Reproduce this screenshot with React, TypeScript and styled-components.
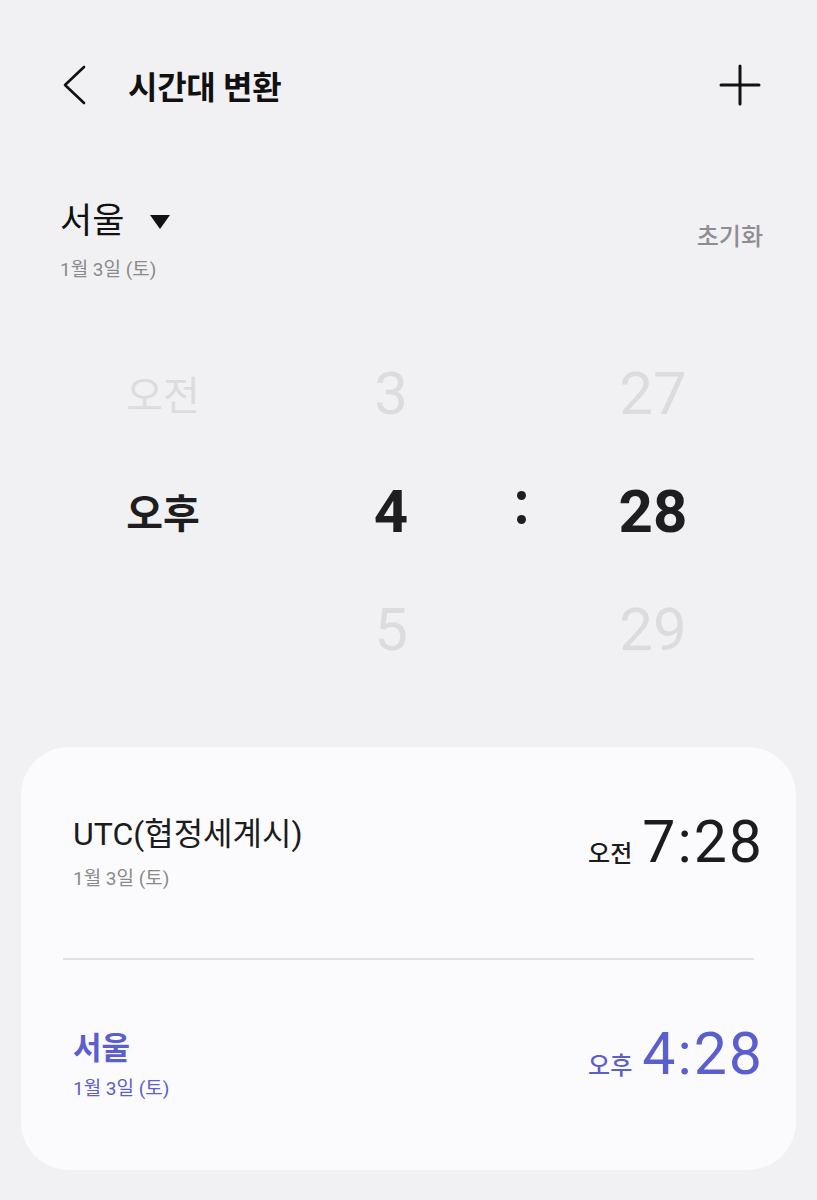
import React, { FC } from 'react';
import styled, { createGlobalStyle } from 'styled-components';

const GlobalStyle = createGlobalStyle`
  html, body {
    margin: 0;
    padding: 0;
    background: #f1f1f3;
  }
  body {
    font-family: Roboto, "Noto Sans CJK KR", sans-serif;
    color: #1c1c1e;
  }
`;

const PURPLE = '#5b5ecd';

const Screen = styled.div`
  width: 817px;
  height: 1200px;
  overflow: hidden;
  background: #f1f1f3;
  display: flex;
  flex-direction: column;
`;

const Header = styled.header`
  display: flex;
  align-items: center;
  height: 70px;
  margin-top: 50px;
  padding: 0 56px 0 60px;
`;

const IconButton = styled.button`
  display: flex;
  align-items: center;
  justify-content: center;
  padding: 0;
  border: 0;
  background: none;
  color: #111;
`;

const Title = styled.h1`
  flex: 1;
  margin: 0 0 0 40px;
  font-size: 32px;
  font-weight: 700;
  letter-spacing: -0.3px;
  color: #111;
`;

const CitySection = styled.section`
  display: flex;
  justify-content: space-between;
  align-items: flex-start;
  margin-top: 80px;
  padding: 0 54px 0 60px;
`;

const CityName = styled.div`
  display: flex;
  align-items: center;
  gap: 26px;
  font-size: 35px;
  font-weight: 400;
  line-height: 44px;
  color: #111;
`;

const DateText = styled.div<{ $accent?: boolean }>`
  margin-top: ${(p) => (p.$accent ? '10px' : '15px')};
  font-size: 19px;
  line-height: 22px;
  color: ${(p) => (p.$accent ? PURPLE : '#8a8a8c')};
`;

const ResetButton = styled.button`
  margin-top: 17px;
  padding: 0;
  border: 0;
  background: none;
  font-family: inherit;
  font-size: 24px;
  font-weight: 500;
  color: #8e8e90;
`;

const Picker = styled.div`
  display: grid;
  grid-template-columns: 206px 250px 10px 254px;
  margin-top: 53px;
  padding-left: 60px;
`;

const PickerColumn = styled.div`
  display: flex;
  flex-direction: column;
  align-items: center;
`;

const PickerCell = styled.div<{ $selected?: boolean; $korean?: boolean }>`
  height: 118px;
  display: flex;
  align-items: center;
  justify-content: center;
  font-size: ${(p) => (p.$korean ? '40px' : '60px')};
  font-weight: ${(p) => (p.$selected ? 700 : 400)};
  color: ${(p) => (p.$selected ? '#1e1e20' : '#dcdcde')};
`;

const Colon = styled.div`
  display: flex;
  flex-direction: column;
  align-items: center;
  justify-content: center;
  gap: 15px;
  height: 118px;
  margin-top: 118px;
  padding-bottom: 8px;
  box-sizing: border-box;

  span {
    width: 9px;
    height: 9px;
    border-radius: 50%;
    background: #1e1e20;
  }
`;

const Card = styled.section`
  margin: 59px 21px 0;
  height: 423px;
  border-radius: 48px;
  background: #fbfbfd;
  display: flex;
  flex-direction: column;
`;

const ZoneRow = styled.div`
  flex: 1;
  display: flex;
  align-items: center;
  justify-content: space-between;
  padding: 0 34px 0 52px;
`;

const ZoneName = styled.div<{ $accent?: boolean }>`
  font-size: ${(p) => (p.$accent ? '31px' : '32px')};
  line-height: 38px;
  font-weight: ${(p) => (p.$accent ? 700 : 400)};
  color: ${(p) => (p.$accent ? PURPLE : '#1c1c1e')};
`;

const Divider = styled.hr`
  margin: 0 42px;
  border: 0;
  border-top: 2px solid #e1e1e3;
`;

const TimeValue = styled.div<{ $accent?: boolean }>`
  display: flex;
  align-items: baseline;
  gap: 10px;
  margin-bottom: 22px;
  color: ${(p) => (p.$accent ? PURPLE : '#1c1c1e')};
`;

const Meridiem = styled.span`
  font-size: 24px;
  font-weight: 500;
`;

const Clock = styled.span`
  font-size: 59px;
  font-weight: 400;
  letter-spacing: 2px;
  margin-right: -2px;
`;

const BackIcon: FC = () => (
  <svg width="28" height="42" viewBox="0 0 28 42" fill="none">
    <path d="M24 3 L5 21 L24 39" stroke="currentColor" strokeWidth="2.6" strokeLinecap="round" strokeLinejoin="round" />
  </svg>
);

const PlusIcon: FC = () => (
  <svg width="42" height="42" viewBox="0 0 42 42" fill="none">
    <path d="M21 2 V40 M2 21 H40" stroke="currentColor" strokeWidth="3" strokeLinecap="round" />
  </svg>
);

const Caret: FC = () => (
  <svg width="20" height="14" viewBox="0 0 20 14">
    <path d="M0 0 H20 L10 14 Z" fill="#111" />
  </svg>
);

interface Zone {
  name: string;
  date: string;
  meridiem: string;
  time: string;
  accent?: boolean;
}

const zones: Zone[] = [
  { name: 'UTC(협정세계시)', date: '1월 3일 (토)', meridiem: '오전', time: '7:28' },
  { name: '서울', date: '1월 3일 (토)', meridiem: '오후', time: '4:28', accent: true },
];

const App: FC = () => (
  <Screen>
    <GlobalStyle />
    <Header>
      <IconButton><BackIcon /></IconButton>
      <Title>시간대 변환</Title>
      <IconButton><PlusIcon /></IconButton>
    </Header>

    <CitySection>
      <div>
        <CityName>서울 <Caret /></CityName>
        <DateText>1월 3일 (토)</DateText>
      </div>
      <ResetButton>초기화</ResetButton>
    </CitySection>

    <Picker>
      <PickerColumn>
        <PickerCell $korean>오전</PickerCell>
        <PickerCell $korean $selected>오후</PickerCell>
        <PickerCell $korean />
      </PickerColumn>
      <PickerColumn>
        <PickerCell>3</PickerCell>
        <PickerCell $selected>4</PickerCell>
        <PickerCell>5</PickerCell>
      </PickerColumn>
      <Colon><span /><span /></Colon>
      <PickerColumn>
        <PickerCell>27</PickerCell>
        <PickerCell $selected>28</PickerCell>
        <PickerCell>29</PickerCell>
      </PickerColumn>
    </Picker>

    <Card>
      {zones.map((z, i) => (
        <React.Fragment key={z.name}>
          {i > 0 && <Divider />}
          <ZoneRow>
            <div>
              <ZoneName $accent={z.accent}>{z.name}</ZoneName>
              <DateText $accent={z.accent}>{z.date}</DateText>
            </div>
            <TimeValue $accent={z.accent}>
              <Meridiem>{z.meridiem}</Meridiem>
              <Clock>{z.time}</Clock>
            </TimeValue>
          </ZoneRow>
        </React.Fragment>
      ))}
    </Card>
  </Screen>
);

export default App;
